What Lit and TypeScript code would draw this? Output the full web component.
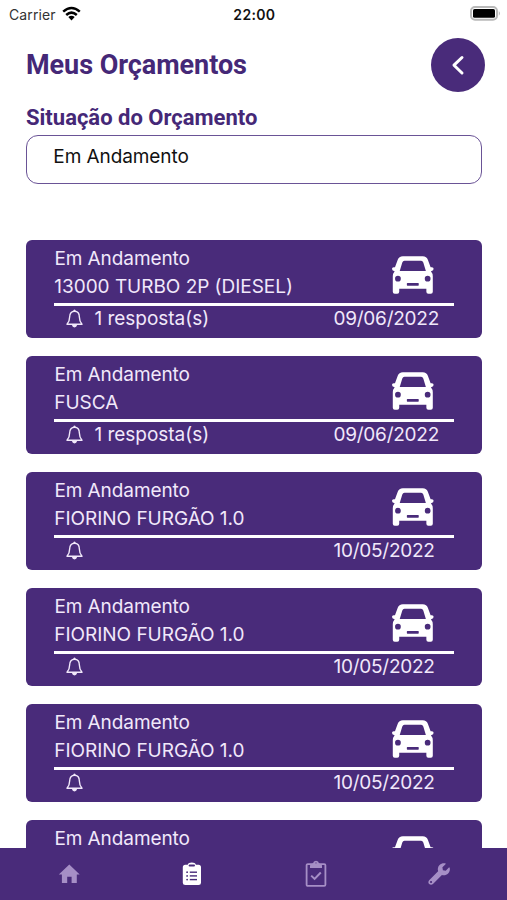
import { LitElement, html, css, svg } from "lit";
import { customElement, property } from "lit/decorators.js";

interface Quote {
  status: string;
  vehicle: string;
  replies: string;
  date: string;
}

const quotes: Quote[] = [
  { status: "Em Andamento", vehicle: "13000 TURBO 2P (DIESEL)", replies: "1 resposta(s)", date: "09/06/2022" },
  { status: "Em Andamento", vehicle: "FUSCA", replies: "1 resposta(s)", date: "09/06/2022" },
  { status: "Em Andamento", vehicle: "FIORINO FURGÃO 1.0", replies: "", date: "10/05/2022" },
  { status: "Em Andamento", vehicle: "FIORINO FURGÃO 1.0", replies: "", date: "10/05/2022" },
  { status: "Em Andamento", vehicle: "FIORINO FURGÃO 1.0", replies: "", date: "10/05/2022" },
  { status: "Em Andamento", vehicle: "", replies: "", date: "" },
];

const bell = svg`
  <path d="M1 15.3 C3.2 12.8 3.6 11.3 3.6 8.2 C3.6 4.4 5.6 2.3 8.5 2.3 C11.4 2.3 13.4 4.4 13.4 8.2 C13.4 11.3 13.8 12.8 16 15.3 Z"
    fill="none" stroke="currentColor" stroke-width="1.4" stroke-linejoin="round"/>
  <path d="M7.2 2.4 Q7.3 .6 8.5 .6 Q9.7 .6 9.8 2.4 Z M5.9 16 H11.1 Q10.6 18.4 8.5 18.4 Q6.4 18.4 5.9 16 Z" fill="currentColor"/>`;

const car = svg`
  <path fill="currentColor" fill-rule="evenodd" d="M11 0 H31 Q35 0 36.2 3.7 L39 11.2 H40.3 Q42 11.2 42 12.8 Q42 14.7 40 15 L39.3 15.1 Q41.2 17.3 41.2 20.2 V36 Q41.2 38 39.2 38 H36.7 Q34.7 38 34.7 36 V33 H7.3 V36 Q7.3 38 5.3 38 H2.8 Q.8 38 .8 36 V20.2 Q.8 17.3 2.7 15.1 L2 15 Q0 14.7 0 12.8 Q0 11.2 1.7 11.2 H3 L5.8 3.7 Q7 0 11 0 Z
    M12.6 4.6 Q11 4.6 10.4 6.3 L7.8 15 H34.2 L31.6 6.3 Q31 4.6 29.4 4.6 Z
    M6 19.8 a2.9 2.9 0 1 0 0 5.8 a2.9 2.9 0 1 0 0 -5.8 Z
    M36 19.8 a2.9 2.9 0 1 0 0 5.8 a2.9 2.9 0 1 0 0 -5.8 Z
    M15.6 27 Q15 27 15 27.6 V29.2 Q15 29.8 15.6 29.8 H26.4 Q27 29.8 27 29.2 V27.6 Q27 27 26.4 27 Z"/>`;

@customElement("quote-card")
export class QuoteCard extends LitElement {
  @property({ attribute: false }) quote!: Quote;

  static styles = css`
    :host {
      display: block;
      box-sizing: border-box;
      height: 97.5px;
      flex: none;
      padding: 4px 27.5px 0 28px;
      border-radius: 6px;
      background: #492b7a;
      color: #f1e8fa;
      font: 19px/28.4px Inter, "Liberation Sans", sans-serif;
    }
    .top {
      display: flex;
      justify-content: space-between;
      height: 59.4px;
      white-space: nowrap;
    }
    .rule { height: 2.6px; background: #fff; }
    .lines { padding-top: 0.8px; }
    .status, .vehicle { height: 28.4px; }
    .status { letter-spacing: -0.08px; padding-left: 0.4px; }
    .vehicle { letter-spacing: -0.03px; padding-left: 0.3px; }
    .car { width: 41.6px; height: 38px; margin: 12px 20.4px 0 0; color: #fff; }
    .bottom { display: flex; align-items: center; height: 26px; white-space: nowrap; }
    .bell { width: 17px; height: 19px; margin: 0 0 0.8px 12px; }
    .replies { margin-left: 11.5px; letter-spacing: -0.03px; }
    .date { width: 120.5px; margin-left: auto; letter-spacing: -0.25px; }
  `;

  render() {
    const q = this.quote;
    return html`
      <div class="top">
        <div class="lines">
          <div class="status">${q.status}</div>
          <div class="vehicle">${q.vehicle}</div>
        </div>
        <svg class="car" viewBox="0 0 42 38">${car}</svg>
      </div>
      <div class="rule"></div>
      <div class="bottom">
        <svg class="bell" viewBox="0 0 17 19">${bell}</svg>
        <span class="replies">${q.replies}</span>
        <span class="date">${q.date}</span>
      </div>`;
  }
}

@customElement("app-root")
export class AppRoot extends LitElement {
  static styles = css`
    :host {
      display: flex;
      flex-direction: column;
      height: 900px;
      overflow: hidden;
      background: #fff;
      font-family: Inter, "Liberation Sans", sans-serif;
      color: #111;
    }
    .statusbar {
      display: grid;
      grid-template-columns: 1fr auto 1fr;
      align-items: center;
      height: 28px;
      flex: none;
      padding: 0 6px 0 9px;
      font-size: 14px;
    }
    .carrier { display: flex; align-items: center; gap: 6px; color: #333; letter-spacing: 0.1px; }
    .wifi { width: 19px; height: 15px; margin-top: -2px; }
    .time { font-weight: 600; font-size: 14px; letter-spacing: 0.3px; padding-right: 1.4px; }
    .battery { width: 31px; height: 15px; justify-self: end; margin-top: -2px; }
    .header {
      display: flex;
      align-items: center;
      justify-content: space-between;
      height: 54px;
      flex: none;
      margin: 10px 22px 0 26px;
    }
    .title { margin: 0; font: 700 27px/32px Roboto, sans-serif; letter-spacing: -0.05px; color: #452877; }
    .back {
      width: 54px;
      height: 54px;
      padding: 0;
      border: 0;
      border-radius: 50%;
      background: #492b7a;
      color: #fff;
    }
    .back svg { display: block; width: 54px; height: 54px; }
    .label {
      flex: none;
      height: 28px;
      margin: 12px 26px 0;
      font: 700 22px/28px Roboto, sans-serif;
      color: #452877;
    }
    .select {
      box-sizing: border-box;
      height: 49px;
      flex: none;
      margin: 3px 25px 0 26px;
      padding: 1px 0 0 26.3px;
      border: 1.5px solid #6a5396;
      border-radius: 12px;
      font-size: 19px;
      letter-spacing: -0.08px;
      line-height: 40px;
    }
    .list {
      display: flex;
      flex-direction: column;
      gap: 18.5px;
      flex: 1;
      min-height: 0;
      margin: 56px 25.5px 0 26px;
      overflow: hidden;
    }
    .tabs {
      display: grid;
      grid-template-columns: repeat(4, 123.4px);
      justify-content: center;
      justify-items: center;
      align-items: center;
      height: 52px;
      flex: none;
      padding-left: 1px;
      background: #492b7a;
      color: #a68fc6;
    }
    .tabs svg { display: block; width: 28px; height: 28px; }
    .active { color: #fff; }
  `;

  render() {
    return html`
      <div class="statusbar">
        <div class="carrier">
          <span>Carrier</span>
          <svg class="wifi" viewBox="0 0 19 15">
            <g fill="none" stroke="#000" stroke-width="2.5">
              <path d="M1.2 5.6 Q9.5 -1.6 17.8 5.6"/>
              <path d="M4.2 9 Q9.5 4.3 14.8 9"/>
            </g>
            <path d="M6.3 11 Q9.5 8.6 12.7 11 L9.5 14.4 Z" fill="#000"/>
          </svg>
        </div>
        <div class="time">22:00</div>
        <svg class="battery" viewBox="0 0 31 15">
          <rect x="1" y="1" width="26" height="12.8" rx="4" fill="#fff" stroke="#b9b9b9" stroke-width="2"/>
          <rect x="3" y="3" width="22" height="8.8" rx="1.6" fill="#000"/>
          <path d="M28.8 5 Q31 7.4 28.8 9.8 Z" fill="#b5b5b5"/>
        </svg>
      </div>
      <div class="header">
        <h1 class="title">Meus Orçamentos</h1>
        <button class="back" aria-label="Voltar">
          <svg viewBox="0 0 54 54">
            <path d="M31 19.5 L23 27.2 L31 35" fill="none" stroke="currentColor" stroke-width="3" stroke-linecap="round" stroke-linejoin="round"/>
          </svg>
        </button>
      </div>
      <div class="label">Situação do Orçamento</div>
      <div class="select">Em Andamento</div>
      <div class="list">
        ${quotes.map((q) => html`<quote-card .quote=${q}></quote-card>`)}
      </div>
      <div class="tabs">
        <svg viewBox="0 0 28 28">
          <path fill="currentColor" d="M12.2 23 V16.7 H16.6 V23 H21.8 V14.5 H24.7 L14.3 4.6 L3.8 14.5 H6.9 V23 Z"/>
        </svg>
        <svg class="active" viewBox="0 0 28 28">
          <path fill="currentColor" fill-rule="evenodd" d="M7.3 4.7 H9.7 Q10.4 2.5 13.8 2.5 Q17.2 2.5 17.9 4.7 H20.5 Q23 4.7 23 7.2 V22.7 Q23 25 20.5 25 H7.3 Q4.8 25 4.8 22.7 V7.2 Q4.8 4.7 7.3 4.7 Z"/>
          <g fill="#492b7a">
            <rect x="10.6" y="4.6" width="6.4" height="2" rx="1"/>
            <circle cx="9.1" cy="12.2" r=".9"/><circle cx="9.1" cy="15.9" r=".9"/><circle cx="9.1" cy="19.6" r=".9"/>
            <rect x="11.8" y="11.5" width="7.2" height="1.4"/>
            <rect x="11.8" y="15.2" width="7.2" height="1.4"/>
            <rect x="11.8" y="18.9" width="7.2" height="1.4"/>
          </g>
        </svg>
        <svg viewBox="0 0 28 28">
          <g fill="none" stroke="currentColor">
            <rect x="4.6" y="4.1" width="18.8" height="21.8" rx="1.2" stroke-width="1.8"/>
            <path d="M9.2 15.6 L12.6 18.9 L18.8 12.5" stroke-width="2"/>
          </g>
          <path fill="currentColor" fill-rule="evenodd" d="M8 8 V5.6 Q8.3 4.3 11 3.3 Q11.4 .8 14 .8 Q16.6 .8 17 3.3 Q19.7 4.3 20 5.6 V8 Z M14 2.6 a1 1 0 1 0 0 2 a1 1 0 1 0 0 -2 Z"/>
        </svg>
        <svg viewBox="-80 -76 666 666">
          <path fill="currentColor" d="M507.73 109.1c-2.24-9.03-13.54-12.09-20.12-5.51l-74.36 74.36-67.88-11.31-11.31-67.88 74.36-74.36c6.62-6.62 3.43-17.9-5.66-20.16-47.38-11.74-99.55.91-136.58 37.93-39.64 39.64-50.55 97.1-34.05 147.2L18.74 402.76c-24.99 24.99-24.99 65.51 0 90.5 24.99 24.99 65.51 24.99 90.5 0l213.21-213.21c50.12 16.71 107.47 5.68 147.37-34.22 37.07-37.07 49.7-89.32 37.91-136.73zM64 472c-13.25 0-24-10.75-24-24 0-13.26 10.75-24 24-24s24 10.75 24 24c0 13.25-10.75 24-24 24z"/>
        </svg>
      </div>`;
  }
}
